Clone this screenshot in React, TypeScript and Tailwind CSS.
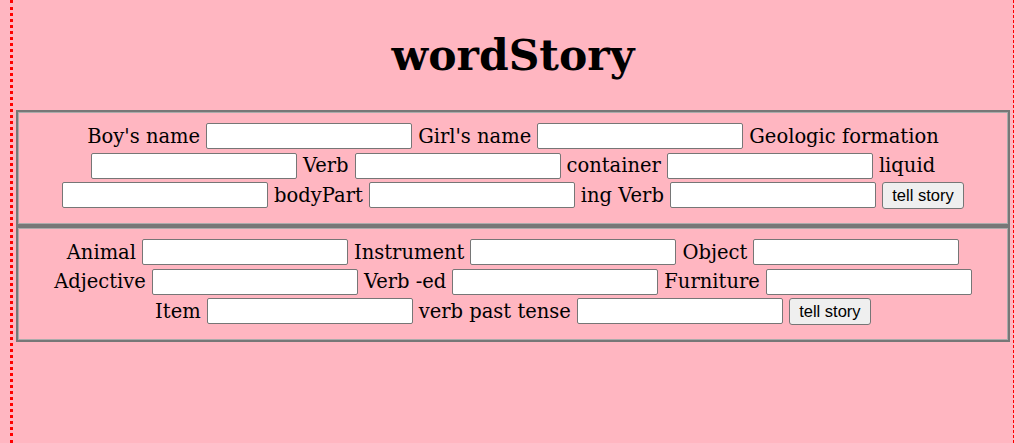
import React from "react";

const serif = { fontFamily: '"DejaVu Serif", Georgia, serif' };

function Field() {
  return (
    <input
      type="text"
      className="w-[206px] h-[26px] shrink-0 bg-white border border-[#767676] rounded-[2px] px-[2px] outline-none"
    />
  );
}

function Label({ children }: { children: React.ReactNode }) {
  return <span className="whitespace-nowrap text-[19.5px] leading-[23px] text-black">{children}</span>;
}

function Btn() {
  return (
    <button
      type="button"
      className="w-[82px] h-[27px] shrink-0 bg-[#efefef] border border-[#767676] rounded-[3px] text-[16.5px] leading-none text-black"
      style={{ fontFamily: '"Liberation Sans", Arial, sans-serif' }}
    >
      tell story
    </button>
  );
}

function Row({ h, children }: { h: string; children: React.ReactNode }) {
  return <div className={`flex items-center justify-center gap-[6px] ${h}`}>{children}</div>;
}

function Box({ children }: { children: React.ReactNode }) {
  return (
    <div className="mx-[3px] border-2 border-[#777777] shadow-[inset_0_0_0_1px_#ababab] pt-[9px] pb-[14px]">
      {children}
    </div>
  );
}

export default function App() {
  return (
    <div className="min-h-screen bg-[#ffb6c1] pl-[10px]" style={serif}>
      <div className="min-h-screen border-l-[3px] border-r border-dotted border-[#ff0000] [border-right-style:dashed]">
        <h1 className="pt-[32px] pb-[32px] text-center text-[42.5px] leading-[46px] font-bold text-black">
          wordStory
        </h1>
        <Box>
          <Row h="h-[30px]">
            <Label>Boy's name</Label>
            <Field />
            <Label>Girl's name</Label>
            <Field />
            <Label>Geologic formation</Label>
          </Row>
          <Row h="h-[29px]">
            <Field />
            <Label>Verb</Label>
            <Field />
            <Label>container</Label>
            <Field />
            <Label>liquid</Label>
          </Row>
          <Row h="h-[30px]">
            <Field />
            <Label>bodyPart</Label>
            <Field />
            <Label>ing Verb</Label>
            <Field />
            <Btn />
          </Row>
        </Box>
        <Box>
          <Row h="h-[30px]">
            <Label>Animal</Label>
            <Field />
            <Label>Instrument</Label>
            <Field />
            <Label>Object</Label>
            <Field />
          </Row>
          <Row h="h-[29px]">
            <Label>Adjective</Label>
            <Field />
            <Label>Verb -ed</Label>
            <Field />
            <Label>Furniture</Label>
            <Field />
          </Row>
          <Row h="h-[30px]">
            <Label>Item</Label>
            <Field />
            <Label>verb past tense</Label>
            <Field />
            <Btn />
          </Row>
        </Box>
      </div>
    </div>
  );
}
